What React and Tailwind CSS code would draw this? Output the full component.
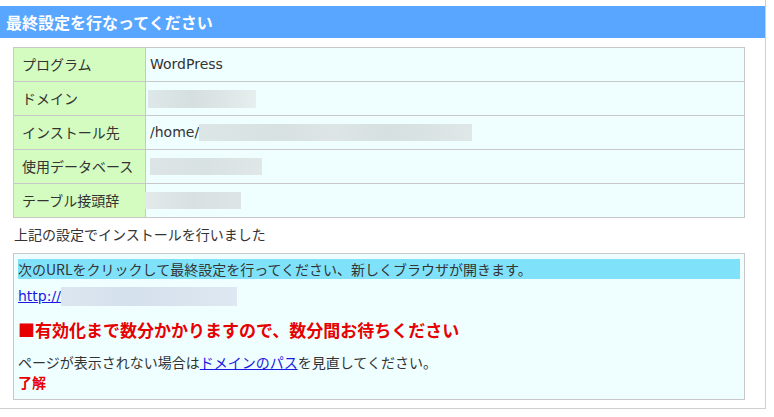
const font = { fontFamily: '"DejaVu Sans", "Noto Sans CJK JP", sans-serif' };

const Blur = ({ className }) => (
  <span className={`inline-block align-middle ${className}`} />
);

const rows = [
  { label: 'プログラム', value: <span>WordPress</span> },
  { label: 'ドメイン', value: <Blur className="w-[108px] h-[18px] -ml-[2px] bg-[linear-gradient(90deg,#dfe8e8,#d6dfe0_40%,#dde5e6_70%,#e6eeee)]" /> },
  {
    label: 'インストール先',
    value: (
      <span className="flex items-center">
        /home/
        <Blur className="w-[273px] h-[17px] bg-[linear-gradient(90deg,#dde6e6,#d8e1e2_30%,#dde5e6_50%,#d6e0e0_70%,#dfe7e7)]" />
      </span>
    ),
  },
  { label: '使用データベース', value: <Blur className="w-[112px] h-[17px] bg-[linear-gradient(90deg,#dce4e5,#d9e2e2_50%,#dfe7e7)]" /> },
  { label: 'テーブル接頭辞', value: <Blur className="w-[96px] h-[17px] -ml-[5px] bg-[linear-gradient(90deg,#e2eaea,#d8e0e1_50%,#dde5e6)]" /> },
];

export default function App() {
  return (
    <div className="w-[774px] h-[417px] bg-white overflow-hidden text-[#333]" style={font}>
      <div className="w-[766px] h-[409px] pt-[6px] border-r border-b border-[#cfcfcf]">
        <div className="h-[32px] bg-[#58a6ff] text-white font-bold text-[16px] pl-[6px] flex items-center" style={{ fontFamily: '"Noto Sans CJK JP", sans-serif' }}>
          最終設定を行なってください
        </div>

        <div className="pl-[13px] pr-[20px] pt-[9px]">
          <div className="border border-[#c8c8c8] text-[14px]">
            {rows.map((r, i) => (
              <div key={r.label} className={`flex ${i > 0 ? 'h-[34px] border-t border-[#c8c8c8]' : 'h-[33px]'}`}>
                <div className="w-[132px] shrink-0 bg-[#d4fcc0] border-r border-[#c8c8c8] pl-[8px] flex items-center" style={{ fontFamily: '"Noto Sans CJK JP", sans-serif' }}>
                  {r.label}
                </div>
                <div className="flex-1 bg-[#effeff] pl-[4px] flex items-center">{r.value}</div>
              </div>
            ))}
          </div>

          <p className="text-[14px] mt-[6px] mb-[8px] pl-[1px]" style={{ fontFamily: '"Noto Sans CJK JP", sans-serif' }}>上記の設定でインストールを行いました</p>

          <div className="border border-[#c8c8c8] bg-[#effeff] px-[4px] pt-[5px] pb-[7px] text-[14px]" style={{ fontFamily: '"Noto Sans CJK JP", sans-serif' }}>
            <div className="bg-[#80e2fa] h-[20px] leading-[20px]">次のURLをクリックして最終設定を行ってください、新しくブラウザが開きます。</div>
            <div className="mt-[7px] h-[20px] flex items-center">
              <a href="#" className="text-[#1a1ae6] underline" style={font}>http://</a>
              <Blur className="w-[176px] h-[19px] bg-[linear-gradient(90deg,#dce6f0,#d4e0ec_40%,#dae4ef_70%,#dde8f2)]" />
            </div>
            <div className="mt-[12px] text-[#e60000] font-bold text-[17px] leading-[24px]">■有効化まで数分かかりますので、数分間お待ちください</div>
            <div className="mt-[10px] leading-[20px]">
              ページが表示されない場合は<a href="#" className="text-[#1a1ae6] underline">ドメインのパス</a>を見直してください。
            </div>
            <div className="text-[#e60000] font-bold leading-[20px] text-[14px]">了解</div>
          </div>
        </div>
      </div>
    </div>
  );
}
